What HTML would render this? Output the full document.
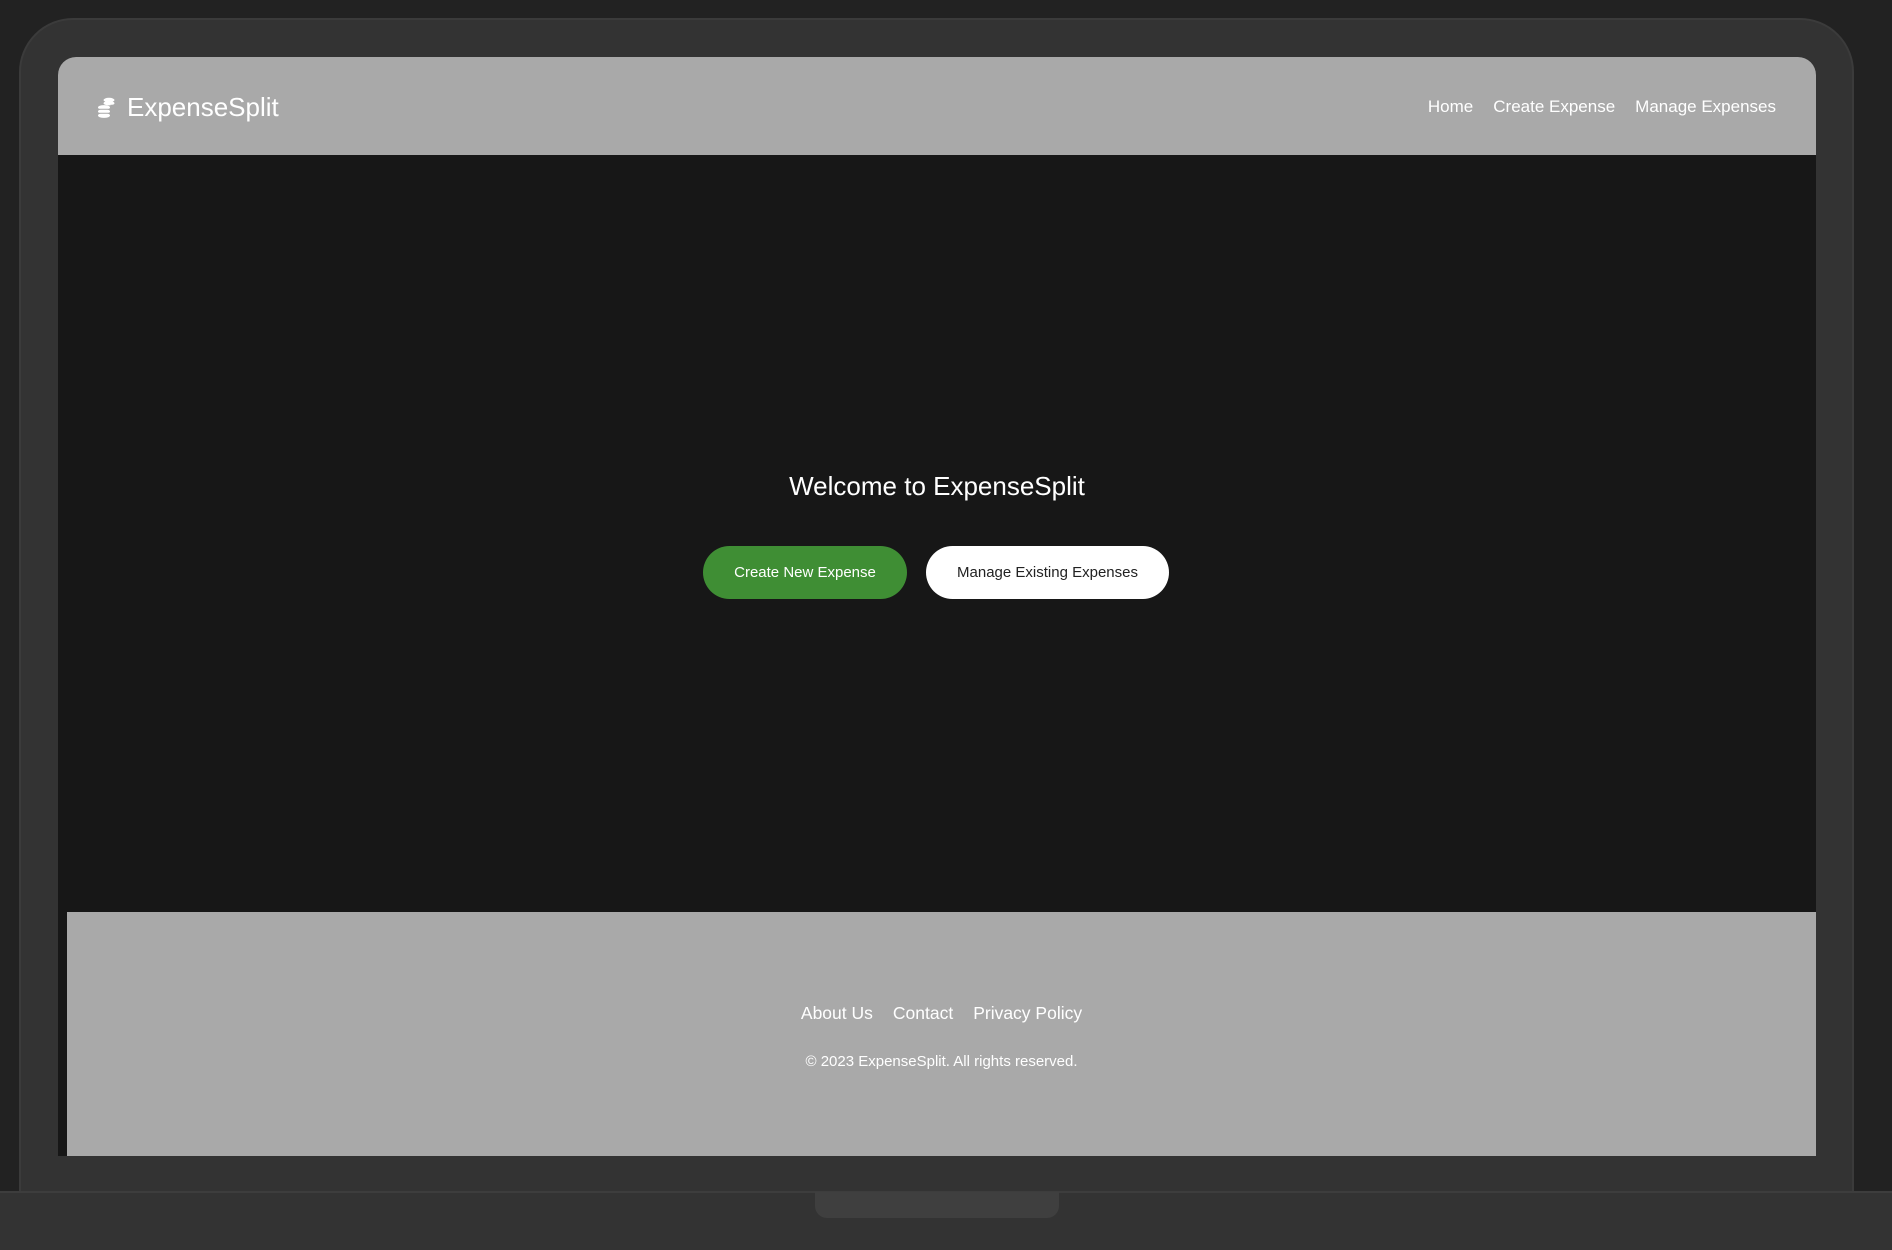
<!DOCTYPE html>
<html><head><meta charset="utf-8"><style>
*{margin:0;padding:0;box-sizing:border-box}
html,body{width:1892px;height:1250px;overflow:hidden;background:#222;font-family:"Liberation Sans",sans-serif;color:#fff}
.laptop{position:absolute;left:19px;top:18px;width:1835px;height:1200px;background:#333;border:2px solid #3b3b3b;border-radius:54px 54px 0 0}
.screen{position:absolute;left:58px;top:57px;width:1758px;height:1099px;background:#171717;border-radius:18px 18px 0 0;overflow:hidden}
.hdr{position:absolute;left:0;top:0;width:100%;height:98px;background:#a9a9a9}
.logo{position:absolute;left:39px;top:35px;font-size:26px;display:flex;align-items:center;gap:10px}
.nav{position:absolute;right:40px;top:40px;font-size:17px;display:flex;gap:20px}
.welcome{position:absolute;left:0;width:100%;top:414px;text-align:center;font-size:26px}
.btn{position:absolute;top:489px;height:53px;border-radius:27px;font-size:15px;display:flex;align-items:center;justify-content:center}
.g{left:645px;width:204px;background:#3f8e34;color:#fff}
.w{left:868px;width:243px;background:#fff;color:#222}
.ftr{position:absolute;left:9px;top:855px;width:1749px;height:244px;background:#a9a9a9;text-align:center}
.fl{position:absolute;left:0;width:100%;top:91px;font-size:17.5px;display:flex;justify-content:center;gap:20px}
.cp{position:absolute;left:0;width:100%;top:141px;font-size:15px}
.base{position:absolute;left:0;top:1191px;width:1892px;height:59px;background:#333;border-top:2px solid #3d3d3d}
.notch{position:absolute;left:815px;top:1192px;width:244px;height:26px;background:#3f3f3f;border-radius:0 0 12px 12px}
</style></head><body>
<div class="laptop"></div>
<div class="screen">
 <div class="hdr">
  <div class="logo"><svg width="20" height="22" viewBox="0 0 20 22" fill="#fff"><ellipse cx="12" cy="3" rx="5.5" ry="2.2"/><ellipse cx="12" cy="6.2" rx="5.5" ry="2.2"/><ellipse cx="7" cy="10.5" rx="6" ry="2.4"/><ellipse cx="7" cy="14.5" rx="6" ry="2.4"/><ellipse cx="7" cy="18.5" rx="6" ry="2.4"/><path d="M1 12.3h12M1 16.3h12M13.5 8.2h5M13.5 11.5h4" stroke="#a9a9a9" stroke-width="1"/></svg><span>ExpenseSplit</span></div>
  <div class="nav"><span>Home</span><span>Create Expense</span><span>Manage Expenses</span></div>
 </div>
 <div class="welcome">Welcome to ExpenseSplit</div>
 <div class="btn g">Create New Expense</div>
 <div class="btn w">Manage Existing Expenses</div>
 <div class="ftr">
  <div class="fl"><span>About Us</span><span>Contact</span><span>Privacy Policy</span></div>
  <div class="cp">© 2023 ExpenseSplit. All rights reserved.</div>
 </div>
</div>
<div class="base"></div>
<div class="notch"></div>
</body></html>
